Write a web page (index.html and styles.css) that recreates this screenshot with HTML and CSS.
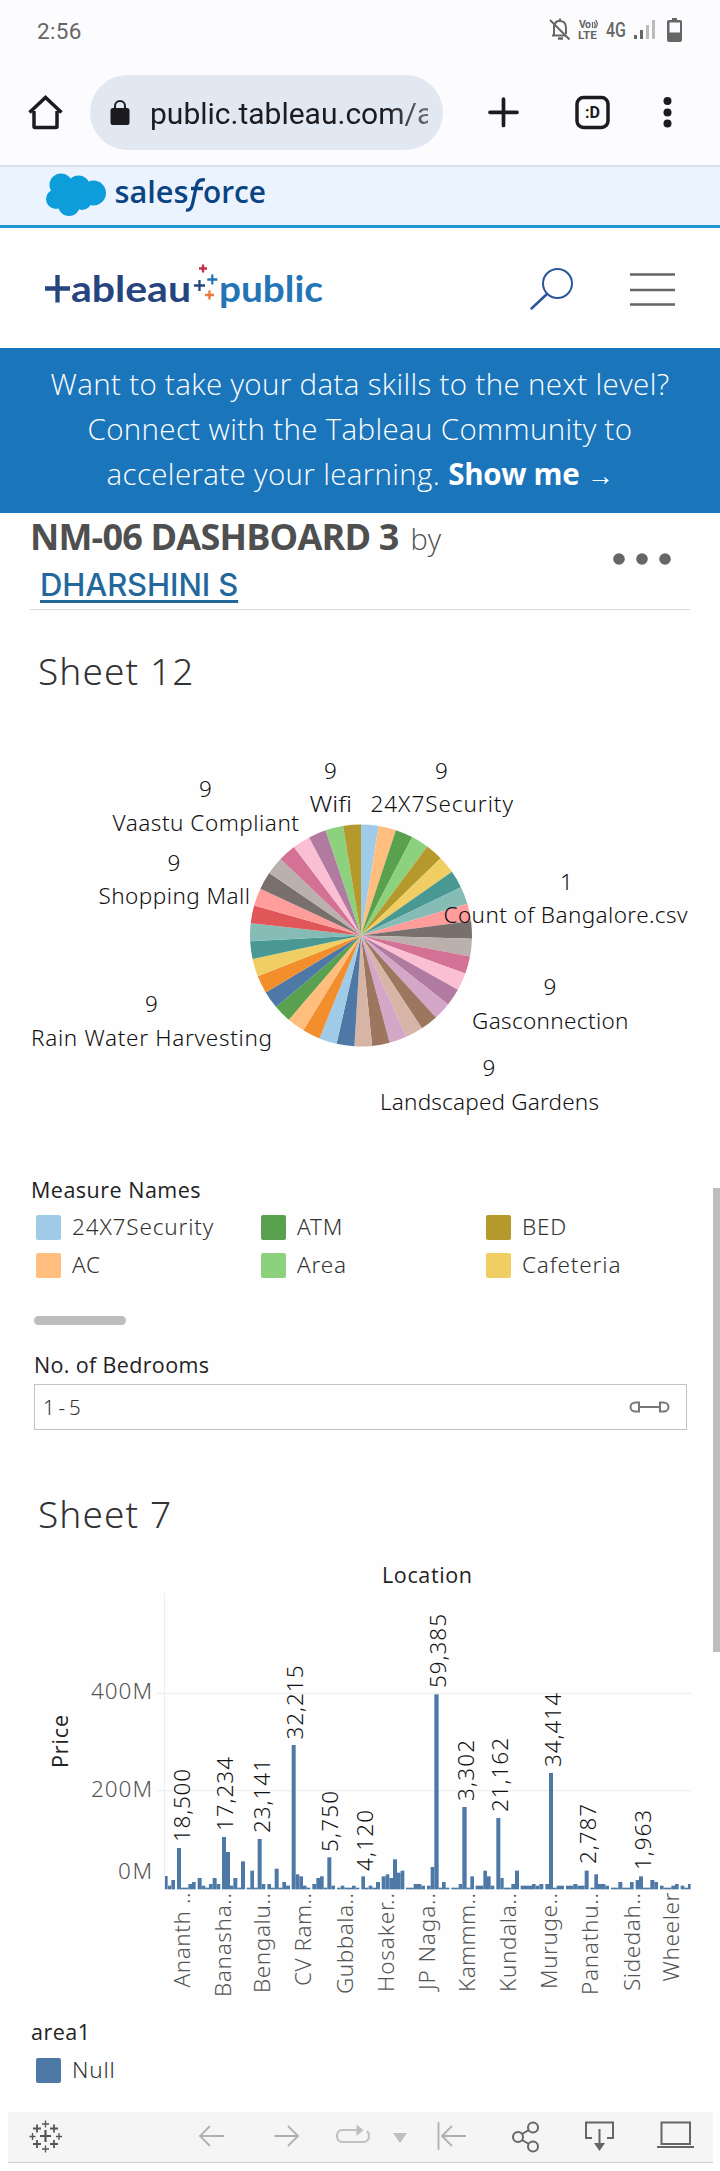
FILE: index.html
```html
<!DOCTYPE html>
<html lang="en">
<head>
<meta charset="utf-8">
<title>NM-06 DASHBOARD 3 | Tableau Public</title>
<link rel="stylesheet" href="styles.css">
</head>
<body>
<header class="status">
  <span class="clock">2:56</span>
  <svg class="status-icons" width="140" height="30" viewBox="545 15 140 30">
    <g fill="none" stroke="#666" stroke-width="2">
      <path d="M552 35.500h14M554 35v-9q1-4 4-5M558 21q8-1 8 7v6M560 21v-2.500"/>
      <path d="M550 20l19.500 19.500"/>
      <path d="M558 38.500h5" stroke-width="2.500"/>
    </g>
    <text x="579" y="28" class="tiny" textLength="12">Vo</text>
    <path d="M592.500 22v6M594 22q2.500 3 0 6M595.500 20q3.500 4 0 8" fill="none" stroke="#666" stroke-width="1.200"/>
    <text x="578" y="39" class="tiny lte" textLength="19" lengthAdjust="spacingAndGlyphs">LTE</text>
    <text x="606" y="36.500" class="fourg" textLength="20" lengthAdjust="spacingAndGlyphs">4G</text>
    <path d="M634 35h3v4h-3zM640 30h3v9h-3z" fill="#666"/>
    <path d="M646 25h3v14h-3zM652 20h3v19h-3z" fill="#bbb"/>
    <path d="M672 18h5v2h3q2 0 2 2v18q0 2-2 2h-11q-2 0-2-2v-18q0-2 2-2h3zM669.500 22.500v10h10.500v-10z" fill="#666" fill-rule="evenodd"/>
  </svg>
</header>
<nav class="browser">
  <svg class="home" width="36" height="36" viewBox="28 94 36 36"><path d="M34 111v15.500q0 1 1 1h21q1 0 1-1V111M29.500 112.500l16-15 16 15" fill="none" stroke="#1c1b1f" stroke-width="3.500"/></svg>
  <div class="pill">
    <svg width="20" height="26" viewBox="0 0 20 26"><rect x="0.500" y="8" width="19" height="17" rx="2.500" fill="#1c1b1f"/><path d="M5 9V6a5 5 0 0 1 10 0v3" fill="none" stroke="#1c1b1f" stroke-width="2"/></svg>
    <div class="url">public.tableau.com/a</div>
  </div>
  <svg class="nav-icons" width="190" height="36" viewBox="486 94 190 36">
    <path d="M490 112.300h27M503.500 99v26.500" stroke="#1c1b1f" stroke-width="3.700" stroke-linecap="round"/>
    <rect x="577" y="97.500" width="31" height="30" rx="6.500" fill="none" stroke="#1c1b1f" stroke-width="3.500"/>
    <text x="585" y="118" class="tabs" textLength="15" lengthAdjust="spacingAndGlyphs">:D</text>
    <g fill="#1c1b1f"><circle cx="667.500" cy="101" r="4"/><circle cx="667.500" cy="112.500" r="4"/><circle cx="667.500" cy="123.500" r="4"/></g>
  </svg>
</nav>
<div class="salesforce">
  <svg width="240" height="58" viewBox="40 167 240 58">
    <g fill="#0d9ddb"><circle cx="61" cy="185" r="11.500"/><circle cx="78.500" cy="187" r="11.500"/><circle cx="93.500" cy="193" r="12.500"/><circle cx="56" cy="199" r="10"/><circle cx="69" cy="205" r="11"/><circle cx="82" cy="200" r="10"/><rect x="60" y="184" width="30" height="18"/></g>
    <text y="203" class="sf"><tspan x="114.500" textLength="74" lengthAdjust="spacingAndGlyphs">sales</tspan></text>
    <text y="203" class="sf"><tspan x="203" textLength="63" lengthAdjust="spacingAndGlyphs">orce</tspan></text>
    <path d="M205 180q-7-1.500-8.500 5.500l-4 18.500q-1.500 7-6.500 6M191 188.500h12" fill="none" stroke="#0b4482" stroke-width="3.300"/>
  </svg>
</div>
<div class="tableau">
  <svg width="290" height="60" viewBox="40 257 290 60">
    <path d="M45 288.500h25M57.500 275v27.500" stroke="#26457f" stroke-width="4.300"/>
  </svg>
  <svg class="actions" width="170" height="50" viewBox="525 260 170 50">
    <g fill="none" stroke="#2a569b" stroke-width="2"><circle cx="557.500" cy="283.500" r="14.500"/><path d="M547 294L531.500 308.500" stroke-width="2.500" stroke-linecap="round"/></g>
    <path d="M630 274.500h45M630 290h45M630 304.500h45" stroke="#666" stroke-width="2.600"/>
  </svg>
</div>
<div class="promo"><p>Want to take your data skills to the next level?</p><p>Connect with the Tableau Community to</p><p>accelerate your learning. <b>Show me <span class="arrow">→</span></b></p></div>
<section class="title">
  <div><h1>NM-06 DASHBOARD 3</h1><span class="by">by</span><br><a>DHARSHINI S</a></div>
  <svg width="60" height="16" viewBox="0 0 60 16" fill="#666"><circle cx="7" cy="8" r="5.800"/><circle cx="30" cy="8" r="5.800"/><circle cx="53" cy="8" r="5.800"/></svg>
</section>
<main>
  <h2 class="s12">Sheet 12</h2>
  <svg class="pie" id="pie" width="720" height="400" viewBox="0 740 720 400"></svg>
  <section class="legend">
    <h3>Measure Names</h3>
    <ul><li><i class="sky"></i><span>24X7Security</span></li><li><i class="green"></i><span>ATM</span></li><li><i class="olive"></i><span>BED</span></li><li><i class="peach"></i><span>AC</span></li><li><i class="lime"></i><span>Area</span></li><li><i class="yellow"></i><span>Cafeteria</span></li></ul>
  </section>
  <div class="hscroll"></div>
  <section class="filter">
    <h3>No. of Bedrooms</h3>
    <div class="box"><span>1 - 5</span><svg width="42" height="14" viewBox="628 1399 42 14" fill="none" stroke="#777" stroke-width="2"><path d="M639 1401.500h-3.500a5 4.500 0 0 0 0 9h3.500zM660 1401.500h3.500a5 4.500 0 0 1 0 9h-3.500zM639 1406h21"/></svg></div>
  </section>
  <h2 class="s7">Sheet 7</h2>
  <svg class="bars" id="bars" width="720" height="460" viewBox="0 1560 720 460"></svg>
  <section class="area">
    <h3>area1</h3>
    <ul><li><i class="blue"></i><span>Null</span></li></ul>
  </section>
</main>
<footer>
  <svg width="705" height="50" viewBox="8 2112 705 50" fill="none">
    <g stroke="#555" stroke-width="1.800"><path d="M40 2136h11M45.500 2130v12" stroke-width="2.200"/><path d="M33 2128.500h8M37 2124.500v8M50 2128.500h8M54 2124.500v8M33 2144h8M37 2140v8M50 2144h8M54 2140v8"/><path d="M42 2124h7M45.500 2120.500v7M42 2149h7M45.500 2145.500v7M29.500 2136.500h6M32.500 2133v7M56 2136.500h6M59 2133v7" stroke-width="1.300"/></g>
    <g stroke="#b0b0b0" stroke-width="1.800"><path d="M224 2136h-24M210 2126l-10 10 10 10M274.500 2136h24M288 2126l10 10-10 10M438.500 2122v28M466 2136h-24M452 2126l-10 10 10 10"/></g>
    <path d="M357 2130h-14q-6 0-6 6t6 6h20q6 0 6-6 0-3-2-5" stroke="#c0c0c0" stroke-width="2"/>
    <path d="M356.500 2124.500v11.500l7-5.700zM393 2133h14l-7 10z" fill="#bebebe"/>
    <g stroke="#666" stroke-width="2"><circle cx="518" cy="2137" r="5"/><circle cx="533" cy="2127.500" r="5"/><circle cx="533" cy="2146.500" r="5"/><path d="M522 2134l7-4M522 2140l7 4M592 2138h-6v-15.500h27v15.500h-6M599.500 2129v16"/><rect x="661.500" y="2122.500" width="28.500" height="21.500"/><path d="M657 2147h37"/></g>
    <path d="M594 2143h11l-5.500 8z" fill="#666"/>
  </svg>
</footer>
<div class="vscroll"></div>
<script src="charts.js"></script>
</body>
</html>
```
FILE: styles.css
```css
* { box-sizing: border-box; }
body { margin: 0; width: 720px; height: 2171px; background: #fefefe; font-family: "Noto Sans", sans-serif; color: #333; overflow: hidden; position: relative; }
svg { display: block; flex: none; }
h1, h2, h3, p, ul { margin: 0; padding: 0; }
ul { list-style: none; }

.status { height: 60px; display: flex; justify-content: space-between; padding: 15px 35px 0 37px; background: #fcfcfe; }
.clock { font: 22.500px/32px Roboto, sans-serif; color: #666; letter-spacing: 0.300px; }
.tiny { font: 700 10.500px Roboto, sans-serif; fill: #666; }
.lte { font-size: 11px; }
.fourg { font: 500 19.500px Roboto, sans-serif; fill: #666; }

.browser { height: 107px; padding-top: 15px; display: flex; border-bottom: 2px solid #dce0e8; background: #fcfcfe; }
.home { margin: 19px 26px 0 28px; }
.pill { width: 353px; height: 75px; border-radius: 38px; background: #e1e8f2; display: flex; align-items: center; padding-left: 20px; gap: 20px; }
.url { width: 278px; overflow: hidden; white-space: nowrap; font: 30px/40px Roboto, sans-serif; color: #1c1b1f; padding-top: 2px; -webkit-mask-image: linear-gradient(90deg, #000 85%, rgba(0,0,0,.6)); }
.nav-icons { margin: 19px 0 0 43px; }
.tabs { font: 700 17px Roboto, sans-serif; fill: #1c1b1f; }

.salesforce { height: 61px; padding-left: 40px; background: #ebf3fe; border-bottom: 3px solid #1f99cd; }
.sf { font: 600 31px "Open Sans", sans-serif; fill: #0b4482; }

.tableau { height: 120px; display: flex; justify-content: space-between; padding: 29px 25px 0 40px; }
.actions { margin-top: 3px; }
.logo { font: 700 37px Lato, sans-serif; }
.navy { fill: #26457f; }
.azure { fill: #2475b5; }

.promo { height: 165px; padding-top: 13px; background: #1b75bb; color: #fff; font: 340 29.500px/45px "Open Sans", sans-serif; letter-spacing: 0.350px; text-align: center; white-space: nowrap; }
.promo b { font-weight: 700; letter-spacing: -0.300px; }
.promo .arrow { font-weight: 400; font-size: 27px; }

.title { margin: 0 30px; height: 97px; border-bottom: 1px solid #d8d8d8; display: flex; justify-content: space-between; white-space: nowrap; color: #4f4f4f; }
.title h1 { display: inline-block; font: 700 36px/48px "Open Sans", sans-serif; letter-spacing: -0.800px; }
.title a { display: inline-block; margin-left: 10px; font: 500 31px/47px Inter, sans-serif; letter-spacing: -0.100px; color: #22689c; text-decoration: underline; text-decoration-thickness: 3px; text-underline-offset: 4px; }
.by { font: 350 29px "Open Sans", sans-serif; margin-left: 12px; }
.title svg { margin: 38px 18px 0 0; }

h2 { font-size: 37px; font-weight: 300; line-height: 48px; padding: 0 0 2px 38px; letter-spacing: 1.100px; }
.s12 { margin-top: 37px; }
.pie { margin-top: 43px; }
svg text { white-space: pre; }
.lab { font: 300 22.500px "Noto Sans", sans-serif; fill: #111; }
.tick { font: 300 22.500px "Noto Sans", sans-serif; fill: #555; }
.head { font: 500 21.500px "Open Sans", sans-serif; fill: #222; }
h3 { font: 500 21.500px/30px "Open Sans", sans-serif; letter-spacing: 0.500px; color: #222; }
.legend { margin: 35px 0 0 31px; height: 110px; }
.legend ul { display: grid; grid-template-columns: 225px 225px 225px; padding: 8px 0 0 5px; }
li { display: flex; gap: 11px; height: 38px; font-size: 22.500px; font-weight: 300; line-height: 27px; white-space: nowrap; letter-spacing: 0.850px; }
li i { width: 25px; height: 25px; border-radius: 2px; margin-top: 2px; }
.sky { background: #a0cbe8; } .green { background: #59a14f; } .olive { background: #b6992d; }
.peach { background: #ffbe7d; } .lime { background: #8cd17d; } .yellow { background: #f1ce63; } .blue { background: #4e79a7; }
.hscroll { width: 92px; height: 9px; border-radius: 5px; background: #bdbdbd; margin: 31px 0 0 34px; }
.filter { margin: 25px 0 0 34px; height: 81px; }
.filter h3 { letter-spacing: 0.350px; }
.box { margin-top: 4px; width: 653px; height: 46px; border: 1px solid #c4c4c4; display: flex; align-items: center; justify-content: space-between; padding: 0 16px 0 8px; font-size: 20.500px; font-weight: 300; word-spacing: -1.500px; }
.s7 { margin-top: 59px; }
.bars { margin-top: 20px; }
.area { margin: -20px 0 0 31px; height: 112px; padding-top: 17px; }
.area ul { padding: 9px 0 0 5px; }
footer { width: 705px; height: 51px; margin-left: 8px; background: #f5f5f5; border-bottom: 1px solid #ccc; }
.vscroll { position: absolute; right: 0; top: 1188px; width: 7px; height: 464px; background: #bdbdbd; }
```
FILE: charts.js
```js
const NS = 'http://www.w3.org/2000/svg';
function add(parent, tag, attrs, text) {
  const el = document.createElementNS(NS, tag);
  for (const k in attrs) el.setAttribute(k, attrs[k]);
  if (text) el.textContent = text;
  parent.appendChild(el);
  return el;
}

// Header wordmark
const mark = document.querySelector('.tableau svg');
add(mark, 'text', { x: 71, y: 302, class: 'logo navy', textLength: 120, lengthAdjust: 'spacingAndGlyphs' }, 'ableau');
add(mark, 'text', { x: 219, y: 302, class: 'logo azure', textLength: 104, lengthAdjust: 'spacingAndGlyphs' }, 'public');
[[203, 268.5, 4, '#c0304a'], [199.500, 285.500, 5.500, '#26457f'], [212.300, 279.500, 5, '#2475b5'], [209.500, 295, 4.500, '#e8793a']].forEach(([x, y, r, c]) =>
  add(mark, 'path', { d: `M${x - r} ${y}h${2 * r}M${x} ${y - r}v${2 * r}`, stroke: c, 'stroke-width': 2.3 }));

// Pie
const pie = document.getElementById('pie');
const slices = ('a0cbe8 ffbe7d 59a14f 8cd17d b6992d f1ce63 499894 86bcb6 ff9d9a 79706e bab0ac d37295 fabfd2 b07aa1 d4a6c8 9d7660 d7b5a6 d4a6c8 9d7660 d7b5a6 ' +
  '4e79a7 a0cbe8 f28e2b ffbe7d 59a14f 4e79a7 f28e2b f1ce63 499894 86bcb6 e15759 ff9d9a 79706e bab0ac d37295 fabfd2 b07aa1 8cd17d b6992d').split(' ');
const cx = 361, cy = 935.5, R = 111;
// first 20 slices sweep to 183.4 degrees, the other 19 close the circle
const angle = i => (i <= 20 ? i * 9.17 : 183.4 + (i - 20) * 176.6 / 19) * Math.PI / 180;
slices.forEach((c, i) => {
  const p = a => `${cx + R * Math.sin(a)} ${cy - R * Math.cos(a)}`;
  add(pie, 'path', { d: `M${cx} ${cy}L${p(angle(i))}A${R} ${R} 0 0 1 ${p(angle(i + 1))}Z`, fill: '#' + c });
});
[['Wifi', 309.5, 352, 812, 330.5, 779], ['24X7Security', 370.5, 513, 812, 441.5, 779], ['Vaastu Compliant', 112.5, 299, 831, 205.5, 797],
 ['Shopping Mall', 98.5, 250, 904, 174, 871], ['Count of Bangalore.csv', 443.5, 687.5, 923, 566.5, 889.5], ['Gasconnection', 472, 628.5, 1029, 550, 994.5],
 ['Landscaped Gardens', 380, 599, 1110, 489, 1076], ['Rain Water Harvesting', 31, 272, 1046, 151.5, 1011.5]].forEach(([t, a, b, y, nx, ny]) => {
  const fit = t === 'Wifi' ? 'spacingAndGlyphs' : 'spacing';
  add(pie, 'text', { x: a, y, class: 'lab', textLength: b - a, lengthAdjust: fit }, t);
  add(pie, 'text', { x: nx, y: ny, class: 'lab', 'text-anchor': 'middle' }, t[0] === 'C' ? '1' : '9');
});

// Bars: [left, right, top] in thirds of a pixel
const bars = document.getElementById('bars');
[[1693.3], [1790.7]].forEach(([y]) => add(bars, 'path', { d: `M157 ${y}H691`, stroke: '#eee', 'stroke-width': 1.3 }));
add(bars, 'path', { d: 'M164.500 1593V1889', stroke: '#eee', 'stroke-width': 1 });
const left = '495-503:948 504-513:977 514-525:960 531-543:864 543-565:983 565-576:972 576-587:966 593-605:954 605-616:977 616-627:983 627-638:972 638-650:954 650-661:972 666-678:831 678-690:876 690-700:977 700-712:954 712-723:983 723-735:904 740-751:983 751-762:932 762-773:983 773-785:837 785-796:972 802-813:972 813-824:983 824-836:926 836-847:983 847-858:966 858-870:977 875-887:555 887-898:943 898-909:949 909-920:977 920-931:983 937-949:972 949-960:954 960-971:949 971-982:983 982-994:892 994-1005:977 1011-1022:983 1022-1033:977 1033-1056:983 1056-1067:977 1067-1078:983';
const right = '4-15:949 15-26:983 26-37:977 37-48:983 48-60:966 65-77:949 77-88:943 88-99:954 99-111:898 111-122:938 122-133:932 138-161:983 161-184:972 184-195:977 201-212:977 212-223:921 223-236:403 236-246:983 246-257:966 257-268:983 274-296:983 296-307:972 307-320:741 320-331:983 331-342:949 347-370:977 370-381:932 381-392:949 392-403:977 409-421:774 421-431:954 431-454:983 454-465:972 465-477:932 482-516:977 516-527:972 527-538:977 538-550:972 556-567:972 567-579:639 579-590:983 590-612:977 618-640:977 640-652:972 652-674:977 674-686:932 691-703:983 703-714:943 714-736:972 736-747:977 753-775:983 775-787:966 787-810:983 810-821:966 827-837:960 837-849:949 849-871:983 871-883:960 883-894:966 900-911:977 911-934:983 934-945:977 945-956:972 962-973:977 973-984:983 984-992:972';
[[left, 0], [right, 1080]].forEach(([set, off]) => set.split(' ').forEach(s => {
  const [a, b, t] = s.split(/[-:]/).map(Number);
  add(bars, 'rect', { x: (a + off) / 3, y: 1560 + t / 3, width: (b - a) / 3, height: (988 - t) / 3, fill: '#4e79a7' });
}));
function upright(t, x, y, len, cls) {
  add(bars, 'text', { transform: `translate(${x} ${y}) rotate(-90)`, class: cls, textLength: len }, t);
}
[['18,500', 190.3, 1842, 73], ['17,234', 233, 1831, 74], ['23,141', 269.500, 1833, 74], ['32,215', 303, 1739.500, 74], ['5,750', 338, 1852, 61], ['4,120', 372.500, 1871, 61],
 ['59,385', 445.700, 1688, 74], ['3,302', 474, 1801, 61], ['21,162', 507.700, 1812, 74], ['34,414', 561, 1767, 74], ['2,787', 596.300, 1864, 60], ['1,963', 651, 1870, 60]]
  .forEach(a => upright(...a, 'lab'));
[['Ananth ..', 190.300, 1987.500, 95], ['Banasha..', 230.700, 1997, 104], ['Bengalu..', 270, 1993, 100], ['CV Ram..', 310.700, 1986, 93], ['Gubbala..', 352.700, 1994, 101], ['Hosaker..', 394.300, 1992, 99],
 ['JP Naga..', 434.700, 1990, 97], ['Kammm..', 475, 1992, 99], ['Kundala..', 515.700, 1992, 99], ['Muruge..', 556.700, 1989, 96], ['Panathu..', 597.700, 1995, 102], ['Sidedah..', 639.700, 1991, 98], ['Wheeler', 679, 1981.500, 89]]
  .forEach(a => upright(...a, 'tick'));
upright('Price', 68, 1768, 53, 'head');
add(bars, 'text', { x: 382, y: 1583, class: 'head', textLength: 90 }, 'Location');
add(bars, 'text', { x: 91, y: 1698.500, class: 'tick', textLength: 61 }, '400M');
add(bars, 'text', { x: 91, y: 1796.500, class: 'tick', textLength: 61 }, '200M');
add(bars, 'text', { x: 118, y: 1878.500, class: 'tick', textLength: 34 }, '0M');
```
